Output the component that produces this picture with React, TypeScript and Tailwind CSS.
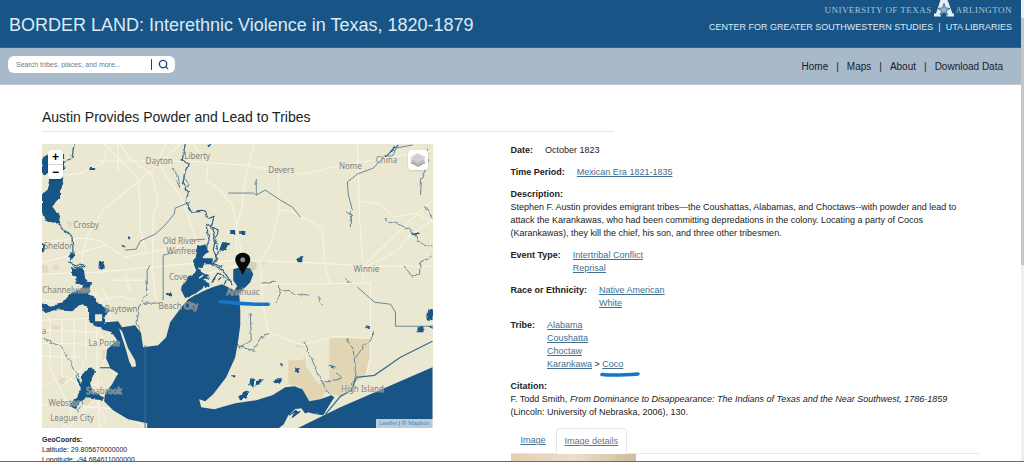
import { Search } from 'lucide-react'

const LAND = '#ebe8d1'
const WATER = '#185586'
const CREEK = '#5a7c93'

const roads = [
  'M116 144L106 150L103 163L80 173L42 178',
  'M98 161L186 161L242 165L280 171L304 174L347 164L432 151',
  'M180 144L150 172L103 210L88 234L82 256L85 290L96 322L99 428',
  'M104 144L127 166L139 180L140 230L146 252',
  'M120 144L129 158L152 175L158 200L153 215L152 270L156 300',
  'M165 144L159 160L165 175L176 190L184 205L196 240L202 275L236 265',
  'M193 144L208 165L206 180L220 190L232 205L236 225L243 262',
  'M42 242L80 238L98 240L125 257L160 250L180 246',
  'M42 262L75 254L105 245',
  'M42 274L100 272L172 265L236 260L300 262L370 266L432 266',
  'M254 144L247 170L243 190L242 207L235 230L238 262',
  'M357 144L358 175L359 215L362 260',
  'M278 174L279 210L270 245L260 260L262 300L268 332L302 345L335 336L370 338',
  'M279 210L291 211L322 228L324 260L329 283',
  'M359 201L380 204L394 217L415 213L432 222',
  'M432 200L410 220L366 263L362 280L370 284L370 355L366 376',
  'M432 220L410 235L395 252L366 266',
  'M262 284L370 283',
  'M42 320L90 318L115 322L98 296L78 284',
  'M42 330L100 332M42 343L95 344M42 356L82 357M50 318V362M62 318V375M74 318V372M86 318V360',
  'M42 386L65 375L84 388L103 381M48 365L72 412L62 428M42 404L110 408L145 426',
  'M84 362L76 384L96 400L106 420L98 428M60 388L80 370M68 428L95 398',
  'M118 144V172M98 330L108 350L100 372',
  'M100 300L120 296L135 300M101 285L112 310M110 280H150M125 275L130 292M42 300L70 302L95 298',
]

const creeks = [
  'M172 167L178 176L180 188L176 180M184 178L188 182L186 190',
  'M256 180L256 194',
  'M350 210L350 227M346 211L352 216',
  'M386 217L386 221L400 225L412 231L418 242L432 247',
  'M426 144L427 165L421 180L420 195M425 205L432 218',
  'M404 266L412 277L419 273L420 262L432 256',
  'M262 283L274 281L281 288L279 297L274 302M281 289L295 294L309 296M318 298L322 304M346 278L350 283',
  'M250 313L251 340L240 348M235 346L254 350L261 337L268 334',
  'M147 280L146 294L138 309L136 322L141 332M143 303H160',
  'M42 338L60 346L70 360L78 376L86 390L78 412',
  'M303 340L310 355L318 375L330 395M320 381L341 379L337 373',
  'M346 338L353 350L355 370L352 385M355 358L363 346L372 337V331',
]

// ditches and canals keep their straight runs
const canals = [
  'M190 202L175 208L174 214L164 226L155 234L140 241L136 249L125 250',
  'M228 193H253L256 195L265 190L280 200L292 207L300 217',
  'M163 300V255L175 252M192 240L205 239M150 265L147 270L147 284',
  'M412 145L396 148L392 156L384 156L373 168L357 174L347 182L348 195L352 210',
  'M357 287L365 294L374 302L390 304L395 312V326H432',
]

const rivers = [
  'M74 144L72 158L64 162L56 160L50 171',
  'M58 222L64 232L72 236L73 254L69 262L78 265L85 266L80 268L75 266',
  'M185 144L182 160L188 163L185 171L183 182L188 192L186 202L190 208L192 212L205 211L208 218L214 216L211 226L215 240L213 250L217 260L211 264L222 270L233 284',
  'M206 224L218 230L216 242L218 255L212 263L222 267M206 226L209 240L205 250',
  'M211 284L218 272L230 282M397 145L384 157',
]

const lakes = [
  // Lake Houston and the river below it
  'M42 158L50 155L64 154V166L62 174L64 182L60 190V198L53 206L60 216L59 222L51 223L44 220L42 212V194L48 188L49 180L54 176L54 170L42 174Z',
  'M72 267L79 268L84 270L85 278L88 281L82 285L74 282L77 278L72 275Z',
  'M99 262L103 261L105 267L98 268ZM90 167H94V170H89ZM129 236L132 238L129 241ZM121 245H126L123 247ZM70 252L75 255L72 259L68 256ZM208 145L213 144L210 148ZM42 244h2v8h-2ZM166 292h5v4h-5Z',
  'M230 231H235V235H230ZM240 232H245V235H240ZM222 242L230 243L226 251L219 250ZM298 257H302V262H298ZM414 232L419 233L416 235L412 234Z',
  'M198 246L206 244L208 252L202 258L213 258L211 264L204 264L200 270L210 276L203 279L210 285L197 292L186 298L181 288L188 276L197 272L194 262Z',
  // Ship channel
  'M42 303L49 306L62 303L72 292L81 290L84 282L91 283L88 294L95 296L98 303L109 310L104 318L104 327L94 325L88 317L88 306L80 305L71 310L55 309L45 312L42 310Z',
  'M365 326L370 327L368 330ZM417 326H423V332H417ZM428 310L432 308V321L426 320ZM429 326H432V330Z',
  'M294 367L300 367L297 372ZM250 378L254 379L252 386L249 385ZM256 381L264 379L261 384L255 385ZM274 378L283 378L279 384L273 382ZM239 394L249 391L247 398L241 399L238 396ZM280 363L282 365L280 368ZM327 364L335 368L332 368ZM232 374h4v2h-4Z',
  'M75 376L82 382L82 373L92 367L95 370L90 383L93 392L104 396L102 400L86 398L79 402L76 409L70 406L77 396L82 387Z',
]

const places = [
  { name: 'Liberty', x: 197, y: 159 },
  { name: 'Dayton', x: 159, y: 164 },
  { name: 'Devers', x: 281, y: 173 },
  { name: 'Nome', x: 350, y: 169 },
  { name: 'China', x: 386, y: 163 },
  { name: 'Crosby', x: 86, y: 228 },
  { name: 'Sheldon', x: 59, y: 249 },
  { name: 'Old River-', x: 181, y: 244 },
  { name: 'Winfree', x: 181, y: 254 },
  { name: 'Cove', x: 178, y: 280 },
  { name: 'Winnie', x: 366, y: 272 },
  { name: 'Channelview', x: 66, y: 293 },
  { name: 'Anahuac', x: 243, y: 295 },
  { name: 'Baytown', x: 121, y: 312 },
  { name: 'Beach City', x: 178, y: 309 },
  { name: 'La Porte', x: 104, y: 346 },
  { name: 'Seabrook', x: 104, y: 394 },
  { name: 'Webster', x: 64, y: 406 },
  { name: 'League City', x: 72, y: 421 },
  { name: 'High Island', x: 362, y: 392 },
]

function EventMap() {
  return (
    <div className="relative overflow-hidden">
      <svg viewBox="42 144 390 284" className="block w-full bg-[#ebe8d1]" role="img" aria-label="Event map">
        <defs>
          {/* makes shorelines and creeks meander */}
          <filter id="meander" filterUnits="userSpaceOnUse" x="42" y="144" width="390" height="284">
            <feTurbulence type="fractalNoise" baseFrequency="0.14" numOctaves="2" seed="4" />
            <feDisplacementMap in="SourceGraphic" scale="5" xChannelSelector="R" yChannelSelector="G" />
          </filter>
        </defs>
        <g fill="#e2d5b3">
          <path d="M329 338H370L369 360L365 374L352 385L340 396L325 392L320 400L308 401L300 387L288 384V360H301L304 358V347H296V345H303L306 367L318 384L329 380Z" />
          <path d="M66 220L73 223L69 228ZM52 325h8v4h-8ZM59 375l7 4-3 6-6-4ZM85 397l9 3-5 6-7-3ZM102 350h3v9h-3ZM42 265h6v9h-6ZM53 265h6v4h-6ZM260 261h5v3h-5Z" opacity=".7" />
        </g>
        <g fill="none" stroke="#f6f4e6" strokeWidth="1.1">
          {roads.map(d => (
            <path key={d} d={d} />
          ))}
        </g>
        <g fill="none" stroke={CREEK} strokeWidth=".9" strokeLinejoin="round">
          {canals.map(d => (
            <path key={d} d={d} />
          ))}
        </g>
        <g filter="url(#meander)">
          <g fill="none" stroke={CREEK} strokeWidth=".9" strokeLinejoin="round">
            {creeks.map(d => (
              <path key={d} d={d} />
            ))}
          </g>
          <g fill="none" stroke="#336789" strokeWidth="1.3" strokeLinejoin="round">
            {rivers.map(d => (
              <path key={d} d={d} />
            ))}
          </g>
          <g fill={WATER}>
            {lakes.map(d => (
              <path key={d} d={d} />
            ))}
          </g>
        </g>
        <path d="M432 341L400 357L374 375L356 377L351 390L340 396L325 414" fill="none" stroke="#3c6d90" strokeWidth="1.3" />
        {/* Trinity and Galveston bays */}
        <g fill={WATER}>
          <path d="M233 269L240 267L250 268L253 274L250 282L244 288L239 293L240 310L240 325L238 340L235 357L226 377L213 394L205 401L199 399L201 407L214 409L235 403L256 400L272 395L285 387L294 386L302 389L309 401L320 399L331 395L334 397L327 408L323 415L315 414L308 412L292 418L278 428H147V423L128 419L113 410L104 401L105 393L112 384L118 373L110 368H100V367H110L106 358L107 349L117 340L113 334L104 333L101 327L106 322L118 321L122 327L135 325L141 333L142 341L143 347L158 345L166 337L170 322L182 306L188 299L198 293L212 287L222 284L234 290L237 286L233 280Z" />
          <path d="M297 428L340 407L432 367V428Z" />
        </g>
        <g fill={LAND}>
          <path d="M119 328L122 331L128 348L135 360L136 366L132 367L129 361L126 350Z" />
          <path d="M95 314H102V321H95ZM101 329L112 332L109 335L100 331ZM109 318l5-2 2 3-4 2Z" />
          <path d="M282 427L288 415L296 408L291 418L299 412L294 409L301 408L306 415L318 413L290 426Z" />
          <path d="M106 369L118 374L111 379L100 377Z" />
        </g>
        {/* marsh at the river mouth */}
        <path d="M196 294l5-3M203 291l1-5M208 288l4-2M198 268l5 1M203 275l-4 3M206 281l4 1" stroke={LAND} strokeWidth="1.5" />
        <path d="M198 284l4-3M204 277l5 2M212 282l3-5M218 280l3-3M224 284l2-4M289 415l7-5M292 417l8-6" stroke={WATER} strokeWidth="1.2" />
        <path d="M145 345V428" stroke="#3f719a" strokeWidth="1" />
        <g fill="#82827f" stroke={LAND} strokeWidth="1" strokeOpacity=".5" paintOrder="stroke" fontSize="8" textAnchor="middle" className="font-['Noto_Sans',sans-serif]">
          {places.map(({ name, x, y }) => (
            <text key={name} x={x} y={y}>{name}</text>
          ))}
          <text x="44" y="334">a</text>
        </g>
        <ellipse cx="250" cy="267" rx="7" ry="5" fill="#777" opacity=".2" transform="rotate(-35 250 267)" />
        <path d="M242.500 252.500C238 252.500 235 255.500 235 259.500C235 264 240 268 242.500 275C245 268 250 264 250 259.500C250 255.500 247 252.500 242.500 252.500Z" fill="#080808" />
        <circle cx="242.500" cy="259.500" r="2.500" fill="#8a8a8a" />
        <path d="M220 301.500C233 303 245 304.500 268 304" fill="none" stroke="#1475cc" strokeWidth="3.500" strokeLinecap="round" />
      </svg>
      <div className="absolute left-[6px] top-[6px] flex w-[15px] flex-col overflow-hidden rounded-sm bg-white font-bold text-black shadow">
        <button className="h-[15px] border-b border-gray-300 text-[12px] leading-[13px]" aria-label="Zoom in">+</button>
        <button className="h-[14px] text-[12px] leading-[13px]" aria-label="Zoom out">−</button>
      </div>
      <button className="absolute right-[5px] top-[6px] flex h-[20px] w-[20px] items-center justify-center rounded bg-white shadow" aria-label="Layers">
        <svg viewBox="0 0 16 16" className="h-[16px] w-[16px]">
          <path d="M8 6.500L16 10.500L8 15L0 10.500Z" fill="#a2a2a2" />
          <path d="M8 4L16 8L8 12.500L0 8Z" fill="#b5b5b5" stroke="#eee" strokeWidth=".5" />
          <path d="M8 1L16 5.500L8 10L0 5.500Z" fill="#cfcfcf" stroke="#f4f4f4" strokeWidth=".5" />
        </svg>
      </button>
      <div className="absolute bottom-0 right-0 bg-white/70 px-[3px] text-[6px] leading-[9px] text-gray-600">
        <a href="#leaflet" className="text-[#3f8fc0]">Leaflet</a> | © <a href="#mapbox" className="text-[#3f8fc0]">Mapbox</a>
      </div>
    </div>
  )
}

function Header() {
  return (
    <header>
      <div className="flex h-[48px] items-start justify-between border-b border-[#2c6493] bg-[#185586] px-[9px] text-[#dceaf5]">
        <h1 className="pt-[13px] text-[18px] leading-6">BORDER LAND: Interethnic Violence in Texas, 1820-1879</h1>
        <div className="flex flex-col items-end">
          <a href="#uta" className="flex h-[17px] items-start gap-[2px] font-['Liberation_Serif',serif] text-[9px] leading-[21px] text-[#a9c4d9]">
            <span className="tracking-wider">UNIVERSITY OF TEXAS</span>
            <svg viewBox="0 0 20 17" className="h-[17px] w-[20px]">
              <path d="M6.500 0H13.500L18.500 13.500H20V16.500H12.500V14L10 12L7 14V16.500H0V13.500H2Z" fill="#e6eef5" />
              <path d="M10 3.500L11.300 7.800L16 8.500L12 10.800L13.500 15L10 12.300L6 15L7.800 10.800L4 8.500L8.700 7.800Z" fill="#9fb5c9" stroke="#356b96" strokeWidth=".9" />
            </svg>
            <span className="tracking-wider">ARLINGTON</span>
          </a>
          <div className="flex items-center gap-[5px] pt-[4px] text-[9px] leading-[13px]">
            <a href="#center">CENTER FOR GREATER SOUTHWESTERN STUDIES</a>
            <span>|</span>
            <a href="#libraries">UTA LIBRARIES</a>
          </div>
        </div>
      </div>
      <div className="flex h-[37px] items-start justify-between border-b border-[#c3ccd3] bg-[#a8baca] pl-[8px] pr-[18px] pt-[8px]">
        <form className="flex h-[17px] w-[167px] items-center rounded-md bg-white">
          <input
            type="text"
            aria-label="Search"
            placeholder="Search tribes, places, and more..."
            className="h-[11px] min-w-0 flex-1 border-r border-[#24445f] pl-[8px] text-[7px] leading-[11px] outline-none placeholder:text-[#6c7c8b]"
          />
          <button type="button" aria-label="Submit search" className="flex w-[23px] justify-center text-[#1d4d78]">
            <Search className="h-[11px] w-[11px]" strokeWidth={3} />
          </button>
        </form>
        <nav className="flex gap-[8px] pt-[4px] text-[10px] leading-[14px] text-[#17202a]">
          <a href="#home">Home</a>
          <span>|</span>
          <a href="#maps">Maps</a>
          <span>|</span>
          <a href="#about">About</a>
          <span>|</span>
          <a href="#download">Download Data</a>
        </nav>
      </div>
    </header>
  )
}

function Field({ label, children }: { label: string; children: React.ReactNode }) {
  return (
    <div className="mb-[9px] flex gap-[12px]">
      <dt className="font-bold">{label}:</dt>
      <dd>{children}</dd>
    </div>
  )
}

function LinkItem({ children }: { children: string }) {
  return (
    <a href="#results" className="text-[#406f92] underline">{children}</a>
  )
}

function Details() {
  return (
    <section className="min-w-0 text-[9px] leading-[13px]">
      <dl>
        <Field label="Date">October 1823</Field>
        <Field label="Time Period">
          <LinkItem>Mexican Era 1821-1835</LinkItem>
        </Field>
        <div className="mb-[9px]">
          <dt className="font-bold">Description:</dt>
          <dd>
            Stephen F. Austin provides emigrant tribes—the Coushattas, Alabamas, and Choctaws--with powder and lead to attack
            the Karankawas, who had been committing depredations in the colony. Locating a party of Cocos (Karankawas), they
            kill the chief, his son, and three other tribesmen.
          </dd>
        </div>
        <Field label="Event Type">
          <LinkItem>Intertribal Conflict</LinkItem>
          <br />
          <LinkItem>Reprisal</LinkItem>
        </Field>
        <Field label="Race or Ethnicity">
          <LinkItem>Native American</LinkItem>
          <br />
          <LinkItem>White</LinkItem>
        </Field>
        <Field label="Tribe">
          <LinkItem>Alabama</LinkItem>
          <br />
          <LinkItem>Coushatta</LinkItem>
          <br />
          <LinkItem>Choctaw</LinkItem>
          <br />
          <LinkItem>Karankawa</LinkItem> &gt;{' '}
          <span className="relative">
            <LinkItem>Coco</LinkItem>
            <svg viewBox="0 0 40 5" className="absolute -left-[2px] top-[13px] h-[5px] w-[40px]">
              <path d="M2 2.500C12 3.500 25 3 38 2" fill="none" stroke="#1475cc" strokeWidth="3.500" strokeLinecap="round" />
            </svg>
          </span>
        </Field>
        <dt className="font-bold">Citation:</dt>
        <dd>
          F. Todd Smith, <i>From Dominance to Disappearance: The Indians of Texas and the Near Southwest, 1786-1859</i>{' '}
          (Lincoln: University of Nebraska, 2006), 130.
        </dd>
      </dl>
      <div role="tablist" className="mt-[9px] flex border-b border-gray-200">
        <button role="tab" className="px-[10px] py-[6px] text-[#406f92] underline">Image</button>
        <button role="tab" aria-selected="true" className="-mb-px rounded-t border border-b-0 border-gray-200 bg-white px-[8px] py-[6px] text-gray-500 underline">
          Image details
        </button>
      </div>
      <div className="h-[60px] w-[125px] bg-linear-to-r from-[#e6cdb4] via-[#e9dfca] to-[#cdbd9f]" />
    </section>
  )
}

export default function App() {
  return (
    <div className="flex h-screen overflow-hidden border-b border-[#6b6b6b] bg-white font-['Liberation_Sans',Arial,sans-serif] text-[#222]">
      <div className="min-w-0 flex-1">
        <Header />
        <main className="px-[42px] pt-[22px]">
          <h2 className="w-[61%] border-b border-gray-200 pb-[4px] text-[14px] leading-5">Austin Provides Powder and Lead to Tribes</h2>
          <div className="grid grid-cols-2 pt-[12px]">
            <div className="pr-[78px]">
              <EventMap />
              <div className="pt-[7px] text-[7px] leading-[10px]">
                <p className="font-bold">GeoCoords:</p>
                <p>Latitude: 29.805670000000</p>
                <p>Longitude: -94.684611000000</p>
              </div>
            </div>
            <Details />
          </div>
        </main>
      </div>
      <div className="w-[3px] bg-[#efefef] pt-[18px]">
        <div className="h-[247px] bg-[#c6c6c6]" />
      </div>
    </div>
  )
}
